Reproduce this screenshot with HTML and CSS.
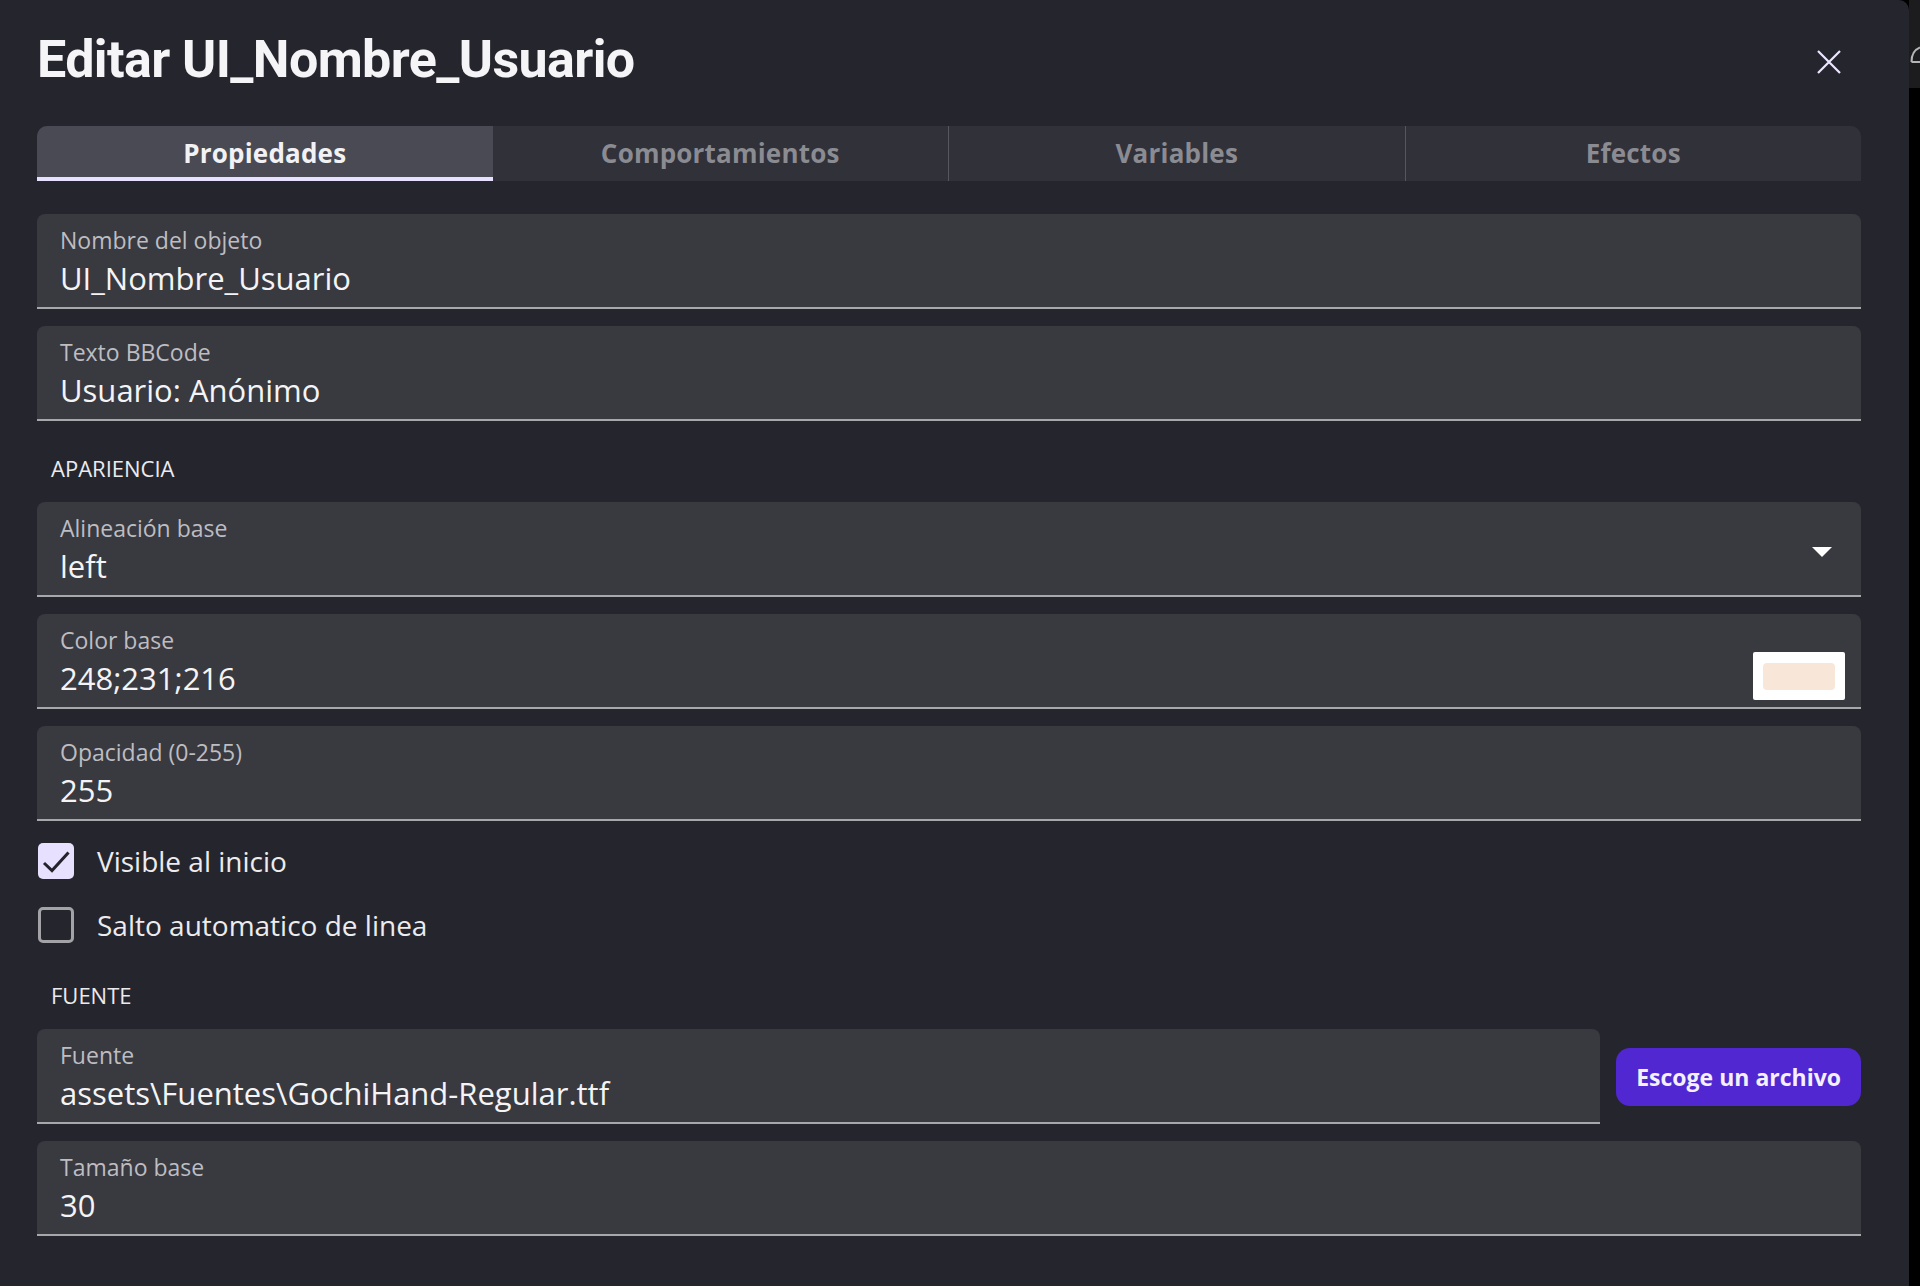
FILE: index.html
```html
<!DOCTYPE html>
<html lang="es">
<head>
    <meta charset="UTF-8">
    <meta name="viewport" content="width=device-width, initial-scale=1.0">
    <title>Editar UI_Nombre_Usuario</title>
    <link rel="stylesheet" href="styles.css">
</head>
<body>
    <div class="dialog">
        <div class="dialog-header">
            <h1>Editar UI_Nombre_Usuario</h1>
            <button class="close" title="Cerrar">
                <svg width="24" height="24" viewBox="0 0 24 24"><path d="M1 1 L23 23 M23 1 L1 23" /></svg>
            </button>
        </div>

        <div class="tabs">
            <div class="tab active">Propiedades</div>
            <div class="tab">Comportamientos</div>
            <div class="tab sep">Variables</div>
            <div class="tab sep">Efectos</div>
        </div>

        <div class="field first">
            <div class="field-text">
                <label>Nombre del objeto</label>
                <div class="value">UI_Nombre_Usuario</div>
            </div>
        </div>
        <div class="field">
            <div class="field-text">
                <label>Texto BBCode</label>
                <div class="value">Usuario: Anónimo</div>
            </div>
        </div>

        <h2 class="section">APARIENCIA</h2>

        <div class="field">
            <div class="field-text">
                <label>Alineación base</label>
                <div class="value">left</div>
            </div>
            <span class="arrow"></span>
        </div>
        <div class="field">
            <div class="field-text">
                <label>Color base</label>
                <div class="value">248;231;216</div>
            </div>
            <span class="swatch"><span class="swatch-color" style="background: rgb(248, 231, 216);"></span></span>
        </div>
        <div class="field">
            <div class="field-text">
                <label>Opacidad (0-255)</label>
                <div class="value">255</div>
            </div>
        </div>

        <div class="checks">
            <div class="check-row">
                <span class="box checked">
                    <svg width="36" height="36" viewBox="0 0 36 36"><path d="M6 20 L14 27.5 L30.5 9.5" /></svg>
                </span>
                <span>Visible al inicio</span>
            </div>
            <div class="check-row">
                <span class="box"></span>
                <span>Salto automatico de linea</span>
            </div>
        </div>

        <h2 class="section">FUENTE</h2>

        <div class="file-row">
            <div class="field">
                <div class="field-text">
                    <label>Fuente</label>
                    <div class="value">assets\Fuentes\GochiHand-Regular.ttf</div>
                </div>
            </div>
            <button class="pick">Escoge un archivo</button>
        </div>
        <div class="field">
            <div class="field-text">
                <label>Tamaño base</label>
                <div class="value">30</div>
            </div>
        </div>
    </div>

    <div class="backdrop">
        <div class="peek">
            <svg width="11" height="88" viewBox="0 0 11 88"><path d="M2.5 62 Q2.5 51 11 47.5 M2.5 62 H11" /></svg>
        </div>
    </div>
</body>
</html>
```

FILE: styles.css
```css
body {
    margin: 0;
    padding: 0;
    background-color: #000;
    font-family: "Open Sans", "Noto Sans", sans-serif;
    display: flex;
    min-height: 100vh;
    overflow: hidden;
}

.dialog {
    width: 1909px;
    flex: none;
    box-sizing: border-box;
    background-color: #25252e;
    border-top-right-radius: 10px;
    padding: 28px 48px 40px 37px;
}

/* header */
.dialog-header {
    display: flex;
    align-items: center;
    justify-content: space-between;
}
h1 {
    margin: 0;
    font-family: Roboto, sans-serif;
    font-size: 52px;
    line-height: 64px;
    font-weight: 700;
    letter-spacing: -0.6px;
    color: #f5f5f7;
}
.close {
    background: none;
    border: none;
    padding: 0;
    margin-top: 4px;
    margin-right: 20px;
    width: 24px;
    height: 24px;
    cursor: pointer;
}
.close svg path {
    stroke: #ece7ff;
    stroke-width: 2.2;
    fill: none;
}

/* tabs */
.tabs {
    display: flex;
    margin-top: 34px;
    height: 55px;
    background-color: #31313a;
    border-radius: 10px 10px 0 0;
    overflow: hidden;
}
.tab {
    flex: 1;
    text-align: center;
    font-size: 26px;
    line-height: 55px;
    font-weight: 700;
    letter-spacing: 0.2px;
    color: #8b8b92;
}
.tab.sep {
    border-left: 1px solid #56565e;
}
.tab.active {
    background-color: #4a4a54;
    color: #f2f2f5;
    box-shadow: inset 0 -4px 0 #e7e0ff;
}

/* text fields */
.field {
    display: flex;
    box-sizing: border-box;
    height: 95px;
    margin-top: 17px;
    padding: 12px 16px 9px 23px;
    background-color: #393940;
    border-radius: 8px 8px 0 0;
    border-bottom: 2px solid #a7a7ac;
}
.field.first {
    margin-top: 33px;
}
.field-text {
    flex: 1;
}
.field label {
    display: block;
    font-size: 23px;
    line-height: 28px;
    color: #bdbdc2;
}
.field .value {
    margin-top: 4px;
    font-size: 31px;
    line-height: 40px;
    color: #f4f4f6;
    white-space: nowrap;
}

.arrow {
    align-self: center;
    margin-right: 13px;
    margin-top: 3px;
    width: 0;
    height: 0;
    border-left: 10px solid transparent;
    border-right: 10px solid transparent;
    border-top: 10px solid #fff;
}

.swatch {
    align-self: flex-end;
    margin-bottom: -2px;
    box-sizing: border-box;
    width: 92px;
    height: 48px;
    padding: 11px 10px 10px;
    background-color: #fff;
    border-radius: 2px;
}
.swatch-color {
    display: block;
    height: 100%;
    border-radius: 4px;
}

/* section titles */
.section {
    margin: 33px 0 20px 14px;
    font-size: 22px;
    line-height: 28px;
    font-weight: 500;
    color: #ebebee;
}
.section + .field,
.section + .file-row .field {
    margin-top: 0;
}

/* checkboxes */
.checks {
    margin-top: 8px;
}
.check-row {
    display: flex;
    align-items: center;
    gap: 23px;
    height: 64px;
    font-size: 28px;
    font-weight: 500;
    color: #ececef;
}
.box {
    width: 36px;
    height: 36px;
    box-sizing: border-box;
    margin-left: 1px;
    border: 3px solid #a3a2a7;
    border-radius: 5px;
    flex: none;
}
.box.checked {
    border: none;
    background-color: #e7e0ff;
}
.box svg path {
    stroke: #24222a;
    stroke-width: 3;
    fill: none;
}
.checks + .section {
    margin-top: 24px;
}

/* font file picker */
.file-row {
    display: flex;
    align-items: center;
    gap: 16px;
}
.file-row .field {
    flex: 1;
}
.pick {
    height: 58px;
    padding: 0 20px;
    border: none;
    border-radius: 14px;
    background-color: #5027d0;
    color: #f4f0ff;
    font-family: "Open Sans", sans-serif;
    font-size: 23px;
    font-weight: 700;
    cursor: pointer;
}

/* what shows behind the dialog */
.backdrop {
    flex: 1;
}
.peek {
    height: 88px;
    background-color: #1c1c1f;
}
.peek svg path {
    stroke: #b4b4b8;
    stroke-width: 2;
    fill: none;
}
```
